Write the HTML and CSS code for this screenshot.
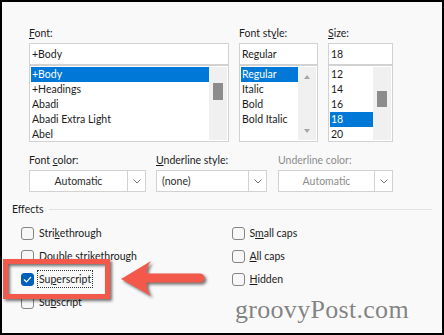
FILE: index.html
```html
<!DOCTYPE html>
<html>
<head>
  <title>Font</title>
  <link rel="stylesheet" href="styles.css">
</head>
<body>

  <div class="dialog">

    <div class="font-row">
      <div class="field font-field">
        <div class="lbl"><u>F</u>ont:</div>
        <div class="input">+Body</div>
        <div class="list">
          <div class="items">
            <div class="item sel">+Body</div>
            <div class="item">+Headings</div>
            <div class="item">Abadi</div>
            <div class="item">Abadi Extra Light</div>
            <div class="item">Abel</div>
          </div>
          <div class="scroll"><div class="thumb font-thumb"></div></div>
        </div>
      </div>

      <div class="field style-field">
        <div class="lbl">Font st<u>y</u>le:</div>
        <div class="input">Regular</div>
        <div class="list">
          <div class="items">
            <div class="item sel">Regular</div>
            <div class="item">Italic</div>
            <div class="item">Bold</div>
            <div class="item">Bold Italic</div>
          </div>
          <div class="scroll arrows">
            <span class="tri up"></span>
            <span class="tri down"></span>
          </div>
        </div>
      </div>

      <div class="field size-field">
        <div class="lbl"><u>S</u>ize:</div>
        <div class="input">18</div>
        <div class="list">
          <div class="items">
            <div class="item">12</div>
            <div class="item">14</div>
            <div class="item">16</div>
            <div class="item sel">18</div>
            <div class="item">20</div>
          </div>
          <div class="scroll"><div class="thumb size-thumb"></div></div>
        </div>
      </div>
    </div>

    <div class="color-row">
      <div class="field color-field">
        <div class="lbl">Font <u>c</u>olor:</div>
        <div class="dropdown">
          <div class="dd-text center">Automatic</div>
          <div class="dd-btn">
            <svg width="8" height="5" viewBox="0 0 8 5"><path d="M0.5 0.5 L4 4 L7.5 0.5" fill="none" stroke="#7a7a7a" stroke-width="1"/></svg>
          </div>
        </div>
      </div>
      <div class="field uline-field">
        <div class="lbl"><u>U</u>nderline style:</div>
        <div class="dropdown">
          <div class="dd-text">(none)</div>
          <div class="dd-btn">
            <svg width="8" height="5" viewBox="0 0 8 5"><path d="M0.5 0.5 L4 4 L7.5 0.5" fill="none" stroke="#7a7a7a" stroke-width="1"/></svg>
          </div>
        </div>
      </div>
      <div class="field ucolor-field disabled">
        <div class="lbl">Underline color:</div>
        <div class="dropdown">
          <div class="dd-text center">Automatic</div>
          <div class="dd-btn">
            <svg width="8" height="5" viewBox="0 0 8 5"><path d="M0.5 0.5 L4 4 L7.5 0.5" fill="none" stroke="#7a7a7a" stroke-width="1"/></svg>
          </div>
        </div>
      </div>
    </div>

    <div class="effects">
      <div class="group-title">
        <span>Effects</span>
        <div class="rule"></div>
      </div>
      <div class="checks">
        <div class="check-col">
          <div class="check"><span class="box"></span><span>Stri<u>k</u>ethrough</span></div>
          <div class="check"><span class="box"></span><span>Double strikethrou<u>g</u>h</span></div>
          <div class="check"><span class="box on">
            <svg width="9" height="7" viewBox="0 0 9 7"><path d="M1 3.5 L3.5 6 L8 1" fill="none" stroke="#fff" stroke-width="1.2"/></svg>
          </span><span class="focus">Su<u>p</u>erscript</span></div>
          <div class="check"><span class="box"></span><span>Su<u>b</u>script</span></div>
        </div>
        <div class="check-col right">
          <div class="check"><span class="box"></span><span>S<u>m</u>all caps</span></div>
          <div class="check"><span class="box"></span><span><u>A</u>ll caps</span></div>
          <div class="check"><span class="box"></span><span><u>H</u>idden</span></div>
        </div>
      </div>
    </div>

    <!-- annotation -->
    <div class="callout"></div>
    <svg class="arrow" width="100" height="50" viewBox="0 0 100 50">
      <path d="M5 24 L35 6 Q30 13 31 18.5 L84 18.5 A4.5 4.5 0 0 1 84 27.5 L31 27.5 Q30 34 35 41 Z" fill="#f2594b"/>
    </svg>

    <div class="watermark">groovyPost.com</div>
  </div>

</body>
</html>
```

FILE: styles.css
```css
body {
  margin: 0;
  padding: 0;
  background-color: #f9f9f9;
}

.dialog {
  position: relative;
  width: 444px;
  height: 335px;
  box-sizing: border-box;
  border: 2px solid #000;
  background-color: #f9f9f9;
  font-family: 'Lato', sans-serif;
  font-size: 10.5px;
  color: #1b1b1b;
  padding: 24px 0 0 10px;
  overflow: hidden;
}

u {
  text-underline-offset: 1px;
}

.lbl {
  line-height: 14px;
  height: 14px;
  margin-bottom: 3px;
  white-space: nowrap;
}

/* Font / style / size */
.font-row {
  display: flex;
  gap: 10px;
  margin-left: 17px;
}

.font-field { width: 200px; }
.style-field { width: 79px; }
.size-field { width: 65px; }

.input {
  height: 22px;
  box-sizing: border-box;
  border: 1px solid #d2d2d2;
  background-color: #fff;
  padding-left: 2px;
  line-height: 20px;
}

.list {
  display: flex;
  height: 77px;
  box-sizing: border-box;
  border: 1px solid #d2d2d2;
  background-color: #fff;
  padding: 1px;
}

.list .items {
  flex: 1;
}

.list .item {
  height: 15px;
  line-height: 15px;
  padding-left: 1px;
  white-space: nowrap;
}

.list .item.sel {
  background-color: #0078d7;
  color: #fff;
}

.scroll {
  position: relative;
  width: 18px;
  background-color: #f0f0f0;
}

.thumb {
  position: absolute;
  left: 4px;
  width: 10px;
  background-color: #8c8c8c;
}

.font-thumb {
  top: 16px;
  height: 17px;
}

.size-thumb {
  top: 24px;
  height: 16px;
}

.arrows {
  display: flex;
  flex-direction: column;
  justify-content: space-between;
  align-items: center;
  padding: 8px 0 7px;
  box-sizing: border-box;
}

.tri {
  width: 0;
  height: 0;
  border-left: 3.5px solid transparent;
  border-right: 3.5px solid transparent;
}

.tri.up { border-bottom: 4px solid #a6a6a6; }
.tri.down { border-top: 4px solid #a6a6a6; }

/* Colour row */
.color-row {
  display: flex;
  gap: 10px;
  margin: 11px 0 0 17px;
}

.color-field { width: 117px; }
.uline-field { width: 111px; }
.ucolor-field { width: 115px; margin-left: 1px; }

.dropdown {
  display: flex;
  height: 22px;
  box-sizing: border-box;
  border: 1px solid #d2d2d2;
  background-color: #fff;
}

.dd-text {
  flex: 1;
  line-height: 20px;
  padding-left: 5px;
  color: #2b2b2b;
}

.dd-text.center {
  text-align: center;
  padding-left: 0;
}

.dd-btn {
  width: 17px;
  border-left: 1px solid #d2d2d2;
  display: flex;
  align-items: center;
  justify-content: center;
}

.disabled .lbl,
.disabled .dd-text {
  color: #8c8c8c;
}

/* Effects */
.effects {
  margin-top: 10px;
}

.group-title {
  display: flex;
  align-items: center;
  gap: 5px;
  height: 14px;
  line-height: 14px;
  margin-right: 10px;
}

.group-title .rule {
  flex: 1;
  height: 1px;
  background-color: #e2e2e2;
}

.checks {
  display: flex;
  margin-top: 10px;
  margin-left: 9px;
}

.check-col {
  display: flex;
  flex-direction: column;
  gap: 9px;
  width: 285px;
}

.check {
  display: flex;
  align-items: center;
  gap: 5px;
  height: 14px;
  line-height: 14px;
}

.check .box {
  width: 13px;
  height: 13px;
  box-sizing: border-box;
  border: 1px solid #858585;
  border-radius: 3px;
  background-color: #f7f7f7;
  display: flex;
  align-items: center;
  justify-content: center;
}

.check .box.on {
  background-color: #005fb8;
  border-color: #005fb8;
}

.check .focus {
  outline: 1px dotted #333;
  outline-offset: 1px;
}

/* Annotation */
.callout {
  position: absolute;
  left: 1px;
  top: 257px;
  width: 107px;
  height: 40px;
  box-sizing: border-box;
  border: 5px solid #f2594b;
  filter: drop-shadow(2px 2px 1.5px rgba(0, 0, 0, 0.55));
}

.arrow {
  position: absolute;
  left: 114px;
  top: 253px;
  filter: drop-shadow(2px 2px 1.5px rgba(0, 0, 0, 0.55));
}

.watermark {
  position: absolute;
  left: 233px;
  top: 293px;
  font-family: 'Liberation Serif', serif;
  font-size: 26px;
  color: rgba(110, 110, 110, 0.85);
  letter-spacing: 0.3px;
}
```
